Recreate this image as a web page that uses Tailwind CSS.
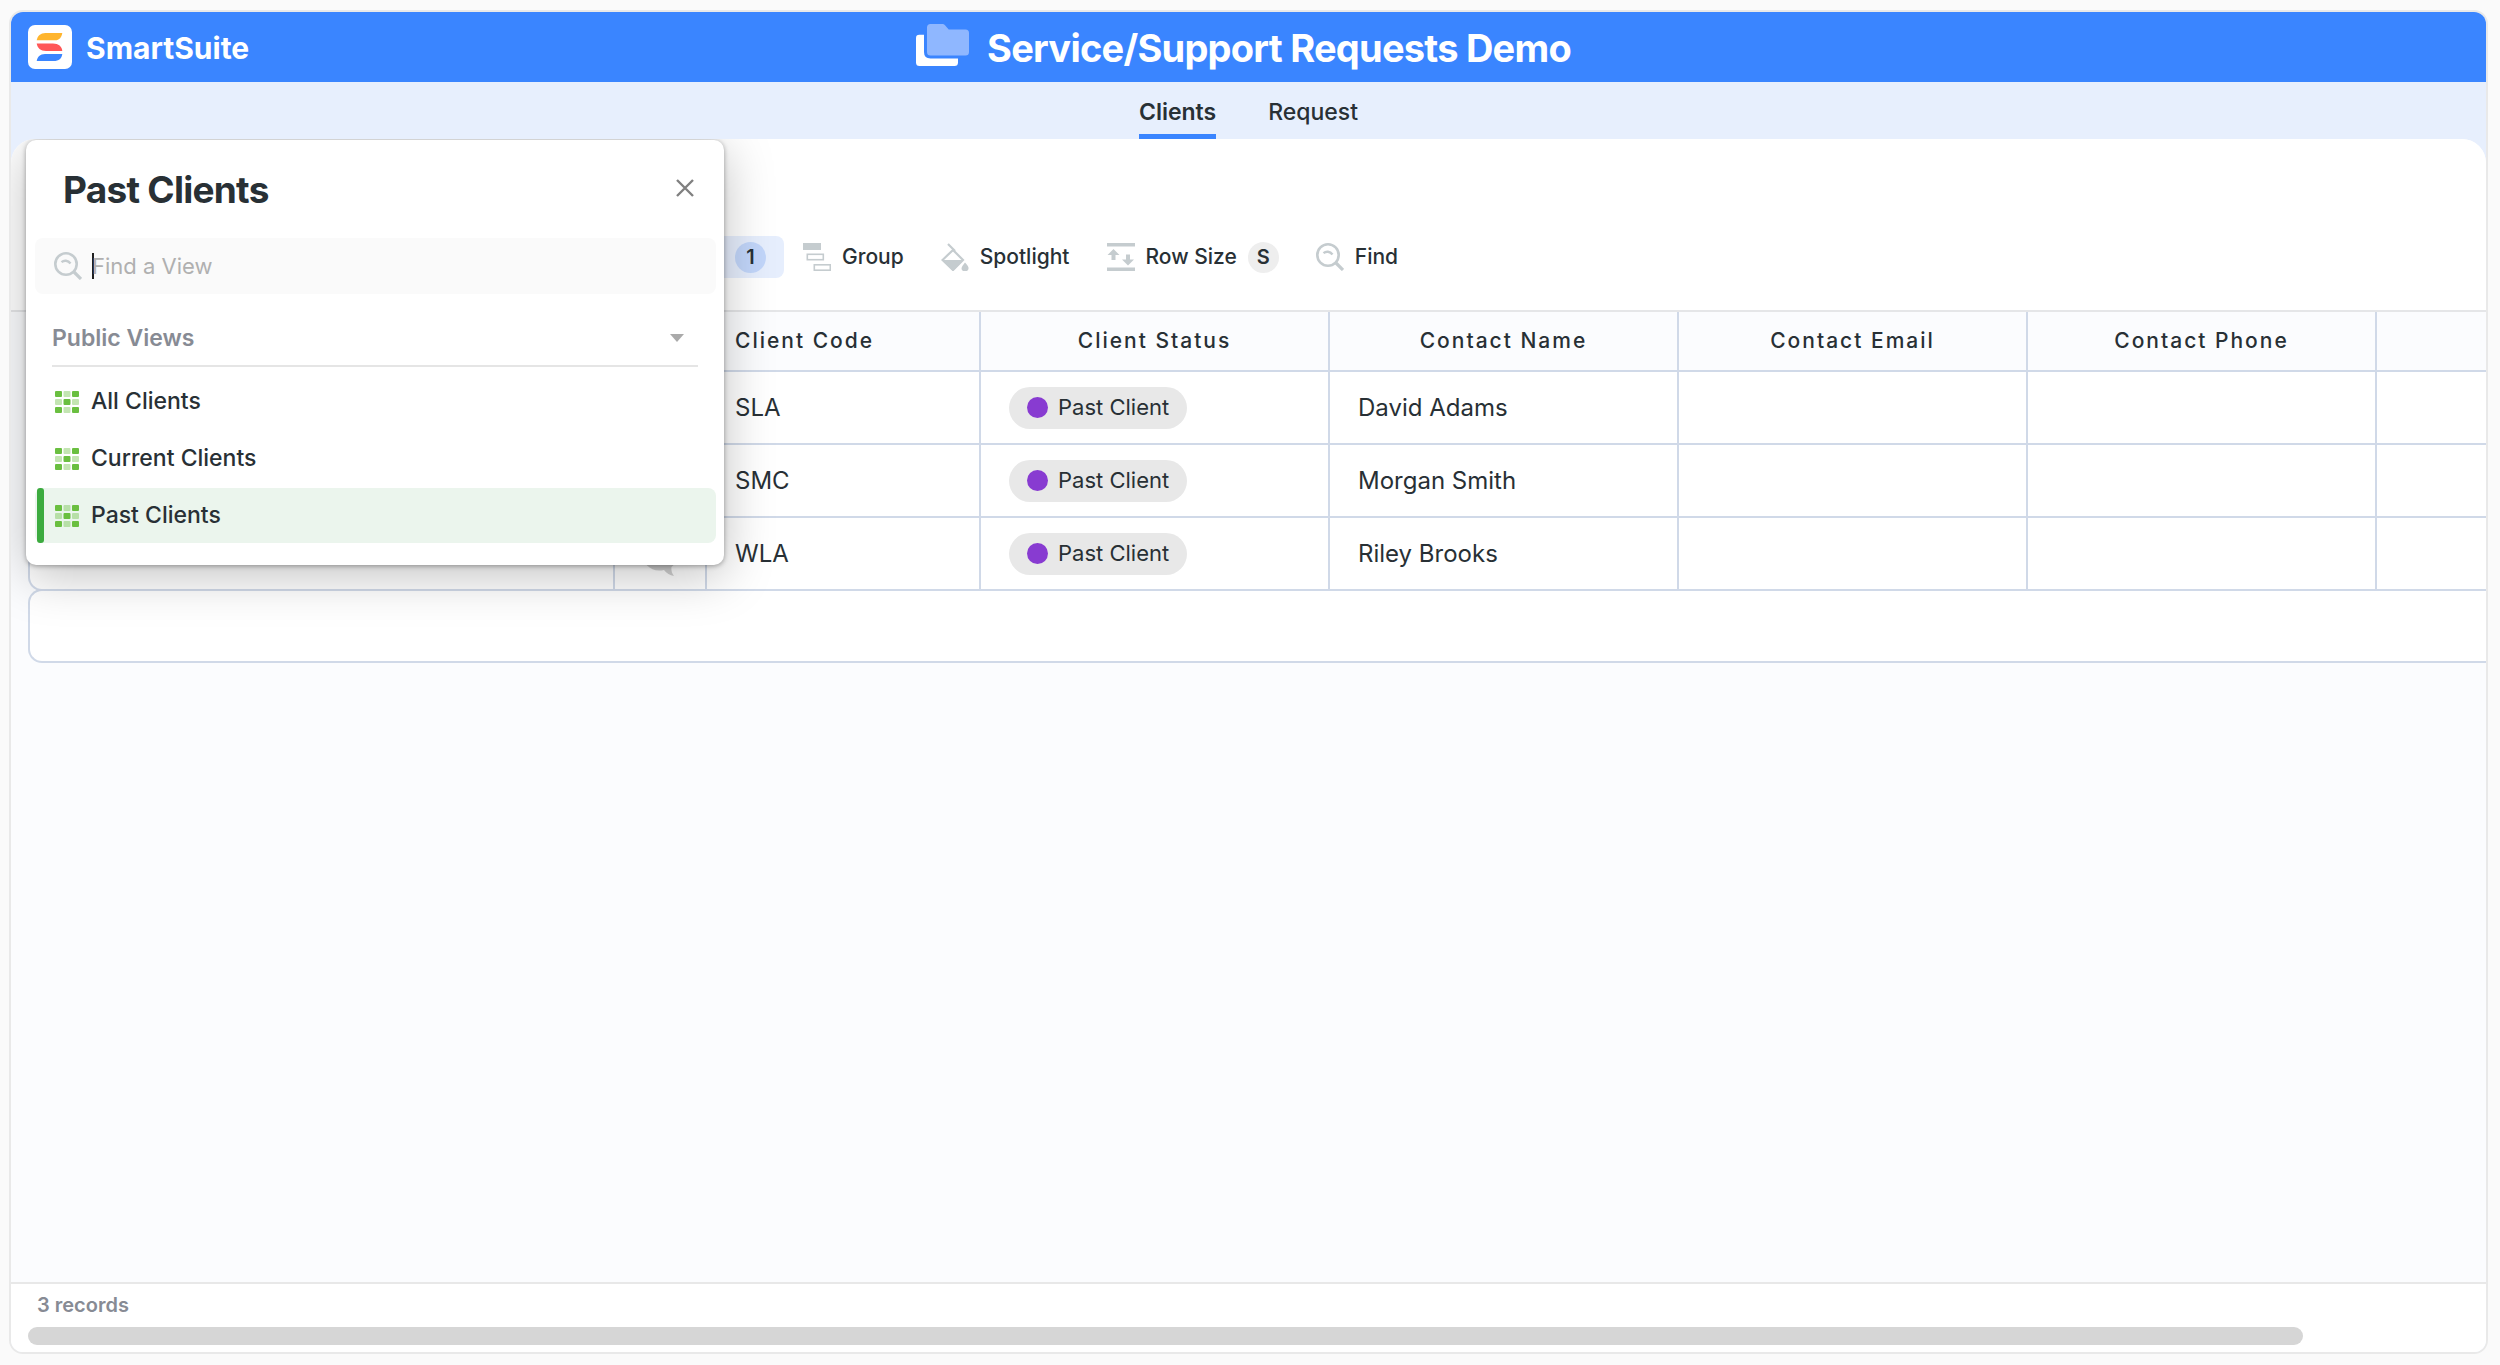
<!DOCTYPE html>
<html lang="en">
<head>
<meta charset="utf-8">
<meta name="viewport" content="width=device-width, initial-scale=1">
<title>Service/Support Requests Demo</title>
<script src="https://cdn.jsdelivr.net/npm/@tailwindcss/browser@4"></script>
</head>
<body class="flex h-screen flex-col bg-[#fafafa] pt-2.5 pr-3 pb-[11px] pl-[9px] font-['Inter',sans-serif] text-[#283035]">
<svg class="hidden" aria-hidden="true">
  <symbol id="grid" viewBox="0 0 24 22">
    <g fill="#6abf40"><rect width="7" height="6" rx="1"/><rect x="17" width="7" height="6" rx="1"/><rect x="8.500" y="8" width="7" height="6" rx="1"/><rect y="16" width="7" height="6" rx="1"/><rect x="17" y="16" width="7" height="6" rx="1"/></g>
    <g fill="#6abf40" opacity=".4"><rect x="8.500" width="7" height="6" rx="1"/><rect y="8" width="7" height="6" rx="1"/><rect x="17" y="8" width="7" height="6" rx="1"/><rect x="8.500" y="16" width="7" height="6" rx="1"/></g>
  </symbol>
  <symbol id="search" viewBox="0 0 28 28">
    <g fill="none" stroke="#c5cccf"><circle cx="12" cy="12" r="10.700" stroke-width="2.600"/><path d="M20 20L27 27" stroke-width="3.200"/><path d="M7.500 10.200C10 8 14 8 16.500 11.500" stroke-width="2.400"/></g>
  </symbol>
  <symbol id="chat" viewBox="0 0 44 44">
    <path d="M21 6C11 6 4 12 4 21c0 10 8 17.500 17 17.500 2 0 3.500-.2 5-.6 2.500 3 6 5.600 10 6.100-2-2.500-3-5.500-2.500-9C37.500 31.500 40 27 40 21 40 12 31 6 21 6z" fill="#d0d0d0"/>
  </symbol>
</svg>
<div class="flex min-h-0 flex-1 flex-col overflow-hidden rounded-[14px] border-2 border-[#e9e9e9] bg-[#e7effd]">
  <header class="relative flex h-[70px] shrink-0 items-center justify-center bg-[#3a85ff] pr-2.5 text-white">
    <a href="#" class="absolute inset-y-0 left-[17px] flex items-center gap-[14px]">
      <svg class="size-11" viewBox="0 0 44 44"><rect width="44" height="44" rx="7" fill="#fff"/>
        <path d="M8.700 15.300C9.500 11 12.500 8 17.500 8H34.300C33.700 12 31.500 15.300 27 15.300z" fill="#ffb52e"/>
        <path d="M8.700 18.500H25C30.500 18.500 34 21.500 34.300 26H18C12.500 26 9.300 23 8.700 18.500z" fill="#ff5757"/>
        <path d="M34.300 29C33.700 33.500 31 36 25.500 36H8.700C9.300 32 12 29 17 29z" fill="#3a85ff"/></svg>
      <span class="pt-0.5 text-[30px] leading-10 font-bold">SmartSuite</span>
    </a>
    <div class="flex items-center gap-[18px]">
      <svg class="h-[42px] w-[53px] -translate-y-0.5" viewBox="0 0 53 42"><path d="M0 14Q0 10.700 3.300 10.700H8V28Q8 34.500 14.500 34.500H42V38.500Q42 42 38.500 42H3.500Q0 42 0 38.500z" fill="#fff"/><path d="M11 3.500Q11 0 14.500 0H26.500Q28 0 29 1.200L32.700 5.500H49.500Q53 5.500 53 9V28Q53 31.500 49.500 31.500H14.500Q11 31.500 11 28z" fill="#8fb7ff"/></svg>
      <h1 class="pt-0.5 text-[38px] leading-[46px] font-bold tracking-[-0.02em]">Service/Support Requests Demo</h1>
    </div>
  </header>
  <nav class="flex h-[57px] shrink-0 items-stretch justify-center gap-[52px] text-[23px]">
    <a href="#" class="flex items-center border-b-[5px] border-[#3a85ff] pt-2 font-semibold">Clients</a>
    <a href="#" class="flex items-center border-b-[5px] border-transparent pt-2 font-medium">Request</a>
  </nav>
  <main class="relative flex min-h-0 flex-1 flex-col overflow-hidden rounded-t-[24px] bg-[#fbfcfe]">
    <div class="flex h-[173px] shrink-0 items-start border-b-2 border-[#e5e6e8] bg-white pt-[97px] pl-[560px] text-[21px] font-medium">
      <button class="flex h-[42px] w-[213px] items-center justify-end rounded-lg bg-[#e6eefd] pr-[18px]"><span class="flex size-[31px] items-center justify-center rounded-full bg-[#c2d6fa] text-[20px] font-semibold">1</span></button>
      <button class="ml-[19px] flex h-[42px] items-center gap-[11px]">
        <svg class="size-7" viewBox="0 0 28 28"><rect width="18" height="7" fill="#c5cccf"/><g fill="none" stroke="#c5cccf" stroke-width="1.600"><rect x="4.300" y="11.300" width="16" height="5.400"/><rect x="11.300" y="21.800" width="16" height="5.400"/></g></svg>Group</button>
      <button class="ml-[37px] flex h-[42px] items-center gap-[11px]">
        <svg class="size-7" viewBox="0 0 28 28"><path d="M7 1L14 8M12 7L1.500 17 12 27 22 17z" fill="none" stroke="#c5cccf" stroke-width="2.200"/><path d="M1.500 17H22L12 28z" fill="#c5cccf"/><path d="M24 19.500Q28 23.500 27.500 25.500A3.500 2.800 0 0 1 20.500 25.500Q20.500 23.500 24 19.500z" fill="#c5cccf"/></svg>Spotlight</button>
      <button class="ml-[37px] flex h-[42px] items-center gap-[11px]">
        <svg class="size-7" viewBox="0 0 28 28"><g fill="#c5cccf"><rect width="28" height="3.500"/><rect y="24.500" width="28" height="3.500"/><path d="M6.500 6L12.500 12H8.500V17H4.500V12H.5zM21 22.500L27 16.500H23V11.500H19V16.500H15z"/></g></svg>Row Size<span class="flex size-[31px] items-center justify-center rounded-full bg-[#eeeeee] text-[20px] font-semibold">S</span></button>
      <button class="ml-[37px] flex h-[42px] items-center gap-[11px]"><svg class="size-7"><use href="#search"/></svg>Find</button>
    </div>
    <div class="shrink-0 pl-[17px]">
      <table class="w-full table-fixed border-separate border-spacing-0">
        <colgroup><col class="w-[587px]"><col class="w-[92px]"><col class="w-[274px]"><col class="w-[349px]"><col class="w-[349px]"><col class="w-[349px]"><col class="w-[349px]"><col></colgroup>
        <thead>
          <tr class="h-[60px] text-[21px] tracking-[2px] *:border-b-2 *:border-[#d0d9e8] *:font-medium">
            <th class="border-r-2"></th><th class="border-r-2"></th>
            <th class="border-r-2 pl-7 text-left">Client Code</th><th class="border-r-2">Client Status</th><th class="border-r-2">Contact Name</th><th class="border-r-2">Contact Email</th><th class="border-r-2">Contact Phone</th><th></th>
          </tr>
        </thead>
        <tbody class="text-[24px]">
          <tr class="h-[73px] *:border-b-2 *:border-[#d0d9e8] *:bg-white">
            <td class="border-r-2 border-l-2"></td><td class="border-r-2"><svg class="mx-auto size-11"><use href="#chat"/></svg></td>
            <td class="border-r-2 pl-7">SLA</td>
            <td class="border-r-2 pl-7"><span class="inline-flex h-[42px] items-center gap-[10px] rounded-full bg-[#e8e8e8] px-[18px] align-middle text-[22px]"><i class="size-[21px] rounded-full bg-[#883bd1]"></i>Past Client</span></td>
            <td class="border-r-2 pl-7">David Adams</td><td class="border-r-2"></td><td class="border-r-2"></td><td></td>
          </tr>
          <tr class="h-[73px] *:border-b-2 *:border-[#d0d9e8] *:bg-white">
            <td class="border-r-2 border-l-2"></td><td class="border-r-2"><svg class="mx-auto size-11"><use href="#chat"/></svg></td>
            <td class="border-r-2 pl-7">SMC</td>
            <td class="border-r-2 pl-7"><span class="inline-flex h-[42px] items-center gap-[10px] rounded-full bg-[#e8e8e8] px-[18px] align-middle text-[22px]"><i class="size-[21px] rounded-full bg-[#883bd1]"></i>Past Client</span></td>
            <td class="border-r-2 pl-7">Morgan Smith</td><td class="border-r-2"></td><td class="border-r-2"></td><td></td>
          </tr>
          <tr class="h-[73px] *:border-b-2 *:border-[#d0d9e8] *:bg-white">
            <td class="rounded-bl-[14px] border-r-2 border-l-2"></td><td class="border-r-2"><svg class="mx-auto size-11"><use href="#chat"/></svg></td>
            <td class="border-r-2 pl-7">WLA</td>
            <td class="border-r-2 pl-7"><span class="inline-flex h-[42px] items-center gap-[10px] rounded-full bg-[#e8e8e8] px-[18px] align-middle text-[22px]"><i class="size-[21px] rounded-full bg-[#883bd1]"></i>Past Client</span></td>
            <td class="border-r-2 pl-7">Riley Brooks</td><td class="border-r-2"></td><td class="border-r-2"></td><td></td>
          </tr>
        </tbody>
      </table>
      <div class="-mt-0.5 h-[74px] rounded-l-[14px] border-2 border-r-0 border-[#d0d9e8] bg-white"></div>
    </div>
    <footer class="mt-auto flex h-[70px] shrink-0 flex-col justify-between border-t-2 border-[#e8e8e8] bg-white px-[17px] pt-[7px] pb-[7px]">
      <p class="pl-[9px] text-[20px] leading-7 font-semibold text-[#878b94]">3 records</p>
      <div class="h-[18px] w-[93.2%] rounded-full bg-[#d6d6d6]"></div>
    </footer>
    <section class="absolute top-px left-[15px] w-[698px] rounded-[10px] bg-white pb-[22px] shadow-[0_10px_50px_rgba(0,0,0,0.25),0_1px_5px_rgba(0,0,0,0.35)]">
      <div class="flex items-center justify-between pt-[26px] pr-[30px] pl-[37px]">
        <h2 class="text-[37px] leading-[48px] font-bold tracking-[-0.02em]">Past Clients</h2>
        <button aria-label="Close"><svg class="-mt-1 size-[18px]" viewBox="0 0 18 18"><path d="M1 1L17 17M17 1L1 17" stroke="#808080" stroke-width="2.400"/></svg></button>
      </div>
      <label class="mt-6 mr-2 ml-[9px] flex h-14 items-center rounded-lg bg-[#fafafa] pl-[19px]">
        <svg class="mr-[10px] size-7"><use href="#search"/></svg>
        <i class="-mr-0.5 h-[26px] w-0.5 bg-[#202020]"></i>
        <input type="text" placeholder="Find a View" aria-label="Find a View" class="min-w-0 flex-1 text-[22px] outline-none placeholder:text-[#b0b0b0]">
      </label>
      <button class="mx-[26px] mt-[17px] flex h-[56px] w-[646px] items-center justify-between border-b-2 border-[#e5e5e5] pr-[14px] text-[23px] font-semibold text-[#878b94]">Public Views
        <svg class="h-2 w-[14px]" viewBox="0 0 14 8"><path d="M0 0H14L7 8z" fill="#aaa"/></svg></button>
      <ul class="mt-[7px] mr-2 ml-[9px] flex flex-col gap-0.5 text-[23px] font-medium">
        <li><a href="#" class="flex h-[55px] items-center gap-[12px] pl-[20px]"><svg class="h-[22px] w-6"><use href="#grid"/></svg>All Clients</a></li>
        <li><a href="#" class="flex h-[55px] items-center gap-[12px] pl-[20px]"><svg class="h-[22px] w-6"><use href="#grid"/></svg>Current Clients</a></li>
        <li class="relative"><a href="#" class="flex h-[55px] items-center gap-[12px] rounded-lg bg-[#ebf5ed] pl-[20px]"><svg class="h-[22px] w-6"><use href="#grid"/></svg>Past Clients</a><i class="absolute inset-y-0 left-0.5 w-[7px] rounded-[3px] bg-[#3cab3f]"></i></li>
      </ul>
    </section>
  </main>
</div>
</body>
</html>
